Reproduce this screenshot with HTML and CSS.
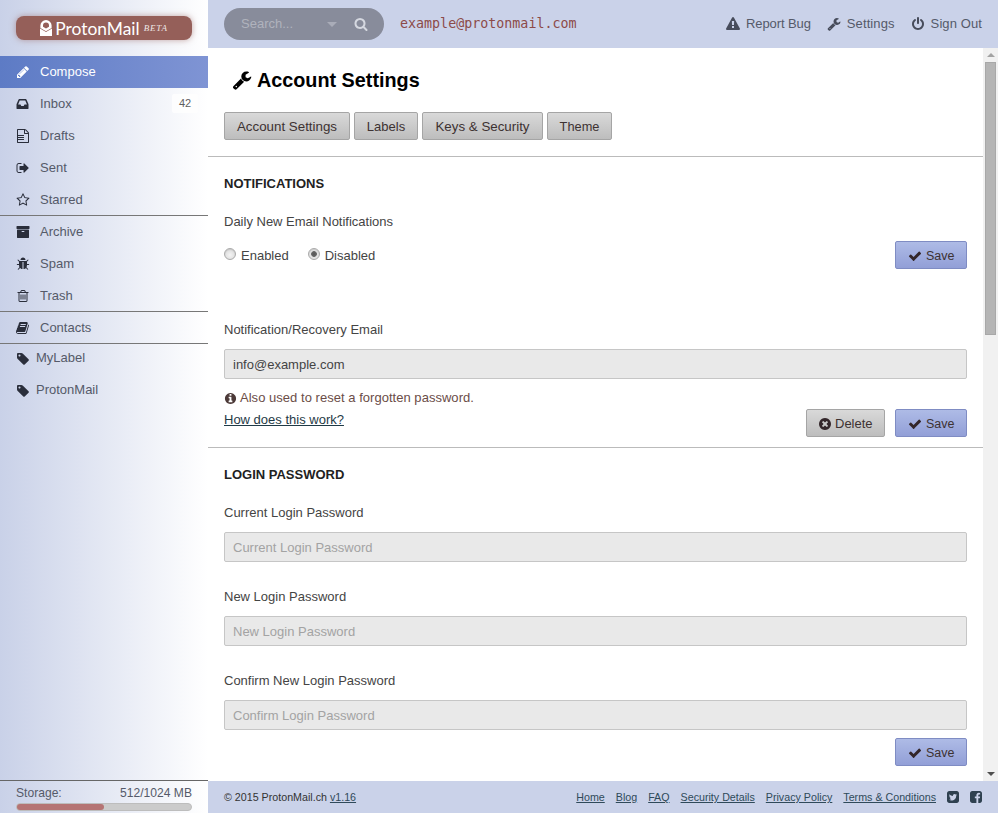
FILE: index.html
```html
<!DOCTYPE html>
<html lang="en">
<head>
<meta charset="utf-8">
<title>ProtonMail - Account Settings</title>
<link rel="stylesheet" href="styles.css">
</head>
<body>
<svg class="sprite" xmlns="http://www.w3.org/2000/svg">
<symbol id="i-wrench" viewBox="0 0 1792 1792"><path d="M448 1472q0-26-19-45t-45-19-45 19-19 45 19 45 45 19 45-19 19-45zm644-420l-682 682q-37 37-90 37-52 0-90-37l-106-108q-38-36-38-90 0-53 38-91l681-681q39 98 114.500 173.500t173.500 114.500zm634-435q0 39-23 106-47 134-164.500 217.500t-258.500 83.500q-185 0-316.500-131.500t-131.500-316.500 131.500-316.500 316.500-131.500q58 0 121.500 16.500t107.500 46.500q16 11 16 28t-16 28l-293 169v224l193 107q5-3 79-48.500t135.500-81 70.500-35.500q15 0 23.500 10t8.500 25z"/></symbol>
<symbol id="i-pencil" viewBox="0 0 1792 1792"><path d="M491 1536l91-91-235-235-91 91v107h128v128h107zm523-928q0-22-22-22-10 0-17 7l-542 542q-7 7-7 17 0 22 22 22 10 0 17-7l542-542q7-7 7-17zm-54-192l416 416-832 832h-416v-416zm683 96q0 53-37 90l-166 166-416-416 166-165q36-38 90-38 53 0 91 38l235 234q37 39 37 91z"/></symbol>
<symbol id="i-inbox" viewBox="-64 0 1792 1792"><path d="M1023 960h316q-1-3-2.500-8.500t-2.500-7.500l-212-496h-708l-212 496q-1 3-2.500 8.500t-2.500 7.500h316l95 192h320zm513 30v482q0 26-19 45t-45 19h-1408q-26 0-45-19t-19-45v-482q0-62 25-123l238-552q10-25 36.500-42t52.500-17h832q26 0 52.500 17t36.500 42l238 552q25 61 25 123z"/></symbol>
<symbol id="i-file" viewBox="0 0 1792 1792"><path d="M1596 380q28 28 48 76t20 88v1152q0 40-28 68t-68 28h-1344q-40 0-68-28t-28-68v-1600q0-40 28-68t68-28h896q40 0 88 20t76 48zm-444-244v376h376q-10-29-22-41l-313-313q-12-12-41-22zm384 1528v-1024h-416q-40 0-68-28t-28-68v-416h-768v1536h1408zm-1280-864q0-14 9-23t23-9h704q14 0 23 9t9 23v64q0 14-9 23t-23 9h-704q-14 0-23-9t-9-23v-64zm736 224q14 0 23 9t9 23v64q0 14-9 23t-23 9h-704q-14 0-23-9t-9-23v-64q0-14 9-23t23-9h704zm0 256q14 0 23 9t9 23v64q0 14-9 23t-23 9h-704q-14 0-23-9t-9-23v-64q0-14 9-23t23-9h704z"/></symbol>
<symbol id="i-signout" viewBox="0 0 1792 1792"><path d="M704 1440q0 4 1 20t.5 26.500-3 23.500-10 19.500-20.500 6.500h-320q-119 0-203.500-84.500t-84.500-203.500v-704q0-119 84.500-203.500t203.500-84.500h320q13 0 22.500 9.500t9.500 22.500q0 4 1 20t.5 26.500-3 23.500-10 19.500-20.500 6.500h-320q-66 0-113 47t-47 113v704q0 66 47 113t113 47h312l11.500 1 11.500 3 8 5.500 7 9 2 13.500zm928-544q0 26-19 45l-544 544q-19 19-45 19t-45-19-19-45v-288h-448q-26 0-45-19t-19-45v-384q0-26 19-45t45-19h448v-288q0-26 19-45t45-19 45 19l544 544q19 19 19 45z"/></symbol>
<symbol id="i-star" viewBox="0 0 1792 1792"><path d="M1201 1004l306-297-422-62-189-382-189 382-422 62 306 297-73 421 378-199 377 199zm527-357q0 22-26 48l-363 354 86 500q1 7 1 20 0 50-41 50-19 0-40-12l-449-236-449 236q-22 12-40 12-21 0-31.500-14.500t-10.500-35.500q0-6 2-20l86-500-364-354q-25-27-25-48 0-37 56-46l502-73 225-455q19-41 49-41t49 41l225 455 502 73q56 9 56 46z"/></symbol>
<symbol id="i-archive" viewBox="0 0 1792 1792"><path d="M1088 832q0-26-19-45t-45-19h-256q-26 0-45 19t-19 45 19 45 45 19h256q26 0 45-19t19-45zm576-192v960q0 26-19 45t-45 19h-1408q-26 0-45-19t-19-45v-960q0-26 19-45t45-19h1408q26 0 45 19t19 45zm64-448v256q0 26-19 45t-45 19h-1536q-26 0-45-19t-19-45v-256q0-26 19-45t45-19h1536q26 0 45 19t19 45z"/></symbol>
<symbol id="i-bug" viewBox="0 0 1792 1792"><path d="M1696 960q0 26-19 45t-45 19h-224q0 171-67 290l208 209q19 19 19 45t-19 45q-18 19-45 19t-45-19l-198-197q-5 5-15 13t-42 28.500-65 36.500-82 29-97 13v-896h-128v896q-51 0-101.500-13.500t-87-33-66-39-43.500-32.500l-15-14-183 207q-20 21-48 21-24 0-43-16-19-18-20.500-44.500t15.500-46.500l202-227q-58-114-58-274h-224q-26 0-45-19t-19-45 19-45 45-19h224v-294l-173-173q-19-19-19-45t19-45 45-19 45 19l173 173h844l173-173q19-19 45-19t45 19 19 45-19 45l-173 173v294h224q26 0 45 19t19 45zm-480-576h-640q0-133 93.500-226.500t226.500-93.500 226.500 93.500 93.500 226.500z"/></symbol>
<symbol id="i-trash" viewBox="0 0 1792 1792"><path d="M704 736v576q0 14-9 23t-23 9h-64q-14 0-23-9t-9-23v-576q0-14 9-23t23-9h64q14 0 23 9t9 23zm256 0v576q0 14-9 23t-23 9h-64q-14 0-23-9t-9-23v-576q0-14 9-23t23-9h64q14 0 23 9t9 23zm256 0v576q0 14-9 23t-23 9h-64q-14 0-23-9t-9-23v-576q0-14 9-23t23-9h64q14 0 23 9t9 23zm128 724v-948h-896v948q0 22 7 40.500t14.500 27 10.500 8.500h832q3 0 10.500-8.500t14.500-27 7-40.500zm-672-1076h448l-48-117q-7-9-17-11h-317q-10 2-17 11zm928 32v64q0 14-9 23t-23 9h-96v948q0 83-47 143.500t-113 60.500h-832q-66 0-113-58.500t-47-141.500v-952h-96q-14 0-23-9t-9-23v-64q0-14 9-23t23-9h309l70-167q15-37 54-63t79-26h320q40 0 79 26t54 63l70 167h309q14 0 23 9t9 23z"/></symbol>
<symbol id="i-book" viewBox="0 0 1792 1792"><path d="M1639 478q40 57 18 129l-275 906q-19 64-76.500 107.500t-122.500 43.500h-923q-77 0-148.500-53.500t-99.500-131.500q-24-67-2-127 0-4 3-27t4-37q1-8-3-21.500t-3-19.500q2-11 8-21t16.500-23.500 16.500-23.500q23-38 45-91.500t30-91.500q3-10 .5-30t-.5-28q3-11 17-28t17-23q21-36 42-92t25-90q1-9-2.500-32t.5-28q4-13 22-30.500t22-22.500q19-26 42.500-84.500t27.500-96.500q1-8-3-25.500t-2-26.500q2-8 9-18t18-23 17-21q8-12 16.500-30.500t15-35 16-36 19.500-32 26.500-23.500 36-11.500 47.500 5.500l-1 3q38-9 51-9h761q74 0 114 56t18 130l-274 906q-36 119-71.500 153.500t-128.500 34.500h-869q-27 0-38 15-11 16-1 43 24 70 144 70h923q29 0 56-15.500t35-41.500l300-987q7-22 5-57 38 15 59 43zm-1064 2q-4 13 2 22.500t20 9.500h608q13 0 25.500-9.500t16.500-22.500l21-64q4-13-2-22.500t-20-9.500h-608q-13 0-25.500 9.500t-16.500 22.500zm-83 256q-4 13 2 22.500t20 9.500h608q13 0 25.500-9.500t16.500-22.500l21-64q4-13-2-22.500t-20-9.500h-608q-13 0-25.500 9.500t-16.500 22.500z"/></symbol>
<symbol id="i-tag" viewBox="0 -128 1792 1792"><path d="M576 448q0-53-37.500-90.500t-90.500-37.500-90.500 37.500-37.500 90.500 37.500 90.500 90.500 37.500 90.500-37.500 37.500-90.500zm1067 576q0 53-37 90l-491 492q-39 37-91 37-53 0-90-37l-715-716q-38-37-64.500-101t-26.500-117v-416q0-52 38-90t90-38h416q53 0 117 26.500t102 64.500l715 714q37 39 37 91z"/></symbol>
<symbol id="i-warning" viewBox="0 0 1792 1792"><path d="M1024 1375v-190q0-14-9.500-23.500t-22.500-9.500h-192q-13 0-22.500 9.500t-9.500 23.500v190q0 14 9.500 23.500t22.500 9.500h192q13 0 22.500-9.500t9.500-23.500zm-2-374l18-459q0-12-10-19-13-11-24-11h-220q-11 0-24 11-10 7-10 21l17 457q0 10 10 16.500t24 6.500h185q14 0 23.500-6.500t10.500-16.500zm-14-934l768 1408q35 63-2 126-17 29-46.500 46t-63.500 17h-1536q-34 0-63.500-17t-46.500-46q-37-63-2-126l768-1408q17-31 47-49t65-18 65 18 47 49z"/></symbol>
<symbol id="i-power" viewBox="0 0 1792 1792"><path d="M1664 896q0 156-61 298t-164 245-245 164-298 61-298-61-245-164-164-245-61-298q0-182 80.500-343t226.500-270q43-32 95.500-25t83.500 50q32 42 24.500 94.500t-49.500 84.500q-98 74-151.500 181t-53.500 228q0 104 40.500 198.500t109.500 163.500 163.500 109.500 198.500 40.500 198.500-40.500 163.500-109.500 109.500-163.500 40.500-198.500q0-121-53.500-228t-151.500-181q-42-32-49.500-84.500t24.500-94.500q31-43 84-50t95 25q146 109 226.500 270t80.500 343zm-640-768v640q0 52-38 90t-90 38-90-38-38-90v-640q0-52 38-90t90-38 90 38 38 90z"/></symbol>
<symbol id="i-search" viewBox="0 0 1792 1792"><path d="M1216 832q0-185-131.500-316.500t-316.500-131.500-316.500 131.500-131.500 316.500 131.500 316.500 316.500 131.500 316.500-131.500 131.500-316.500zm512 832q0 52-38 90t-90 38q-54 0-90-38l-343-342q-179 124-399 124-143 0-273.500-55.500t-225-150-150-225-55.500-273.500 55.500-273.500 150-225 225-150 273.500-55.500 273.500 55.500 225 150 150 225 55.500 273.500q0 220-124 399l343 343q37 37 37 90z"/></symbol>
<symbol id="i-check" viewBox="0 0 1792 1792"><path d="M1671 566q0 40-28 68l-724 724-136 136q-28 28-68 28t-68-28l-136-136-362-362q-28-28-28-68t28-68l136-136q28-28 68-28t68 28l294 295 656-657q28-28 68-28t68 28l136 136q28 28 28 68z"/></symbol>
<symbol id="i-times" viewBox="0 0 1792 1792"><path d="M1277 1122q0-26-19-45l-181-181 181-181q19-19 19-45 0-27-19-46l-90-90q-19-19-46-19-26 0-45 19l-181 181-181-181q-19-19-45-19-27 0-46 19l-90 90q-19 19-19 46 0 26 19 45l181 181-181 181q-19 19-19 45 0 27 19 46l90 90q19 19 46 19 26 0 45-19l181-181 181 181q19 19 45 19 27 0 46-19l90-90q19-19 19-46zm387-226q0 209-103 385.500t-279.500 279.500-385.500 103-385.500-103-279.500-279.500-103-385.500 103-385.500 279.500-279.500 385.500-103 385.500 103 279.500 279.500 103 385.500z"/></symbol>
<symbol id="i-info" viewBox="0 0 1792 1792"><path d="M1152 1376v-160q0-14-9-23t-23-9h-96v-512q0-14-9-23t-23-9h-320q-14 0-23 9t-9 23v160q0 14 9 23t23 9h96v320h-96q-14 0-23 9t-9 23v160q0 14 9 23t23 9h448q14 0 23-9t9-23zm-128-896v-160q0-14-9-23t-23-9h-192q-14 0-23 9t-9 23v160q0 14 9 23t23 9h192q14 0 23-9t9-23zm640 416q0 209-103 385.500t-279.500 279.500-385.500 103-385.500-103-279.500-279.500-103-385.500 103-385.500 279.500-279.500 385.500-103 385.500 103 279.500 279.500 103 385.500z"/></symbol>
<symbol id="i-twitter" viewBox="0 0 1792 1792"><path d="M1408 610q-56 25-121 34 68-40 93-117-65 38-134 51-61-66-153-66-87 0-148.500 61.500t-61.500 148.500q0 29 5 48-129-7-242-65t-192-155q-29 50-29 106 0 114 91 175-47-1-100-26v2q0 75 50 133.500t123 72.500q-29 8-51 8-13 0-39-4 21 63 74.500 104t121.500 42q-116 90-261 90-26 0-50-3 148 94 322 94 112 0 210-35.500t168-95 120.500-137 75-162 24.500-168.500q0-18-1-27 63-45 105-109zm256-194v960q0 119-84.500 203.500t-203.500 84.500h-960q-119 0-203.500-84.500t-84.500-203.500v-960q0-119 84.500-203.500t203.500-84.500h960q119 0 203.500 84.500t84.500 203.500z"/></symbol>
<symbol id="i-facebook" viewBox="0 0 1792 1792"><path d="M1376 128q119 0 203.500 84.500t84.500 203.500v960q0 119-84.500 203.500t-203.500 84.500h-188v-595h199l30-232h-229v-148q0-56 23.500-84t91.500-28l122-1v-207q-63-9-178-9-136 0-217.500 80t-81.500 226v171h-200v232h200v595h-532q-119 0-203.500-84.500t-84.500-203.500v-960q0-119 84.500-203.500t203.500-84.500h960z"/></symbol>
</svg>

<div class="app">
  <aside class="sidebar">
    <div class="logo-area">
      <div class="logo">
        <svg class="logo-mark" viewBox="0 0 12 16" fill="#fff"><path d="M0 8.600 6 12l6-3.400V16H0z"/><path fill-rule="evenodd" d="M6 0a5.600 5.600 0 0 1 5.600 5.600V8L6 11.200.4 8V5.600A5.600 5.600 0 0 1 6 0zm0 2.400a3 3 0 0 0-3 3v1.400l3 1.700 3-1.700V5.400a3 3 0 0 0-3-3z"/></svg>
        <span class="logo-name">ProtonMail</span>
        <span class="logo-beta">BETA</span>
      </div>
    </div>
    <nav class="nav">
      <a class="nav-item is-active"><svg class="nav-icon"><use href="#i-pencil"/></svg>Compose</a>
      <a class="nav-item"><svg class="nav-icon"><use href="#i-inbox"/></svg>Inbox<span class="badge">42</span></a>
      <a class="nav-item"><svg class="nav-icon"><use href="#i-file"/></svg>Drafts</a>
      <a class="nav-item"><svg class="nav-icon"><use href="#i-signout"/></svg>Sent</a>
      <a class="nav-item has-rule"><svg class="nav-icon"><use href="#i-star"/></svg>Starred</a>
      <a class="nav-item"><svg class="nav-icon"><use href="#i-archive"/></svg>Archive</a>
      <a class="nav-item"><svg class="nav-icon"><use href="#i-bug"/></svg>Spam</a>
      <a class="nav-item has-rule"><svg class="nav-icon"><use href="#i-trash"/></svg>Trash</a>
      <a class="nav-item has-rule"><svg class="nav-icon"><use href="#i-book"/></svg>Contacts</a>
      <a class="nav-item is-label"><svg class="nav-icon"><use href="#i-tag"/></svg>MyLabel</a>
      <a class="nav-item is-label"><svg class="nav-icon"><use href="#i-tag"/></svg>ProtonMail</a>
    </nav>
    <div class="storage">
      <div class="storage-text"><span>Storage:</span><span>512/1024 MB</span></div>
      <div class="storage-bar"><div class="storage-fill" style="width:50%"></div></div>
    </div>
  </aside>

  <div class="main">
    <header class="topbar">
      <div class="search">
        <input class="search-input" type="text" placeholder="Search...">
        <span class="search-caret"></span>
        <svg class="search-icon"><use href="#i-search"/></svg>
      </div>
      <span class="address">example@protonmail.com</span>
      <div class="top-links">
        <a class="top-link link-tight"><svg class="top-icon"><use href="#i-warning"/></svg>Report Bug</a>
        <a class="top-link link-wide"><svg class="top-icon"><use href="#i-wrench"/></svg>Settings</a>
        <a class="top-link link-wide"><svg class="top-icon"><use href="#i-power"/></svg>Sign Out</a>
      </div>
    </header>

    <div class="middle">
      <main class="content">
        <div class="page-head">
          <h1 class="page-title"><svg class="title-icon"><use href="#i-wrench"/></svg>Account Settings</h1>
          <div class="tabs">
            <button class="btn tab tab-account">Account Settings</button>
            <button class="btn tab tab-labels">Labels</button>
            <button class="btn tab tab-keys">Keys &amp; Security</button>
            <button class="btn tab tab-theme">Theme</button>
          </div>
        </div>

        <section class="section">
          <h2 class="section-title">NOTIFICATIONS</h2>
          <label class="field-label">Daily New Email Notifications</label>
          <div class="radio-row">
            <div class="radios">
              <label class="radio"><input type="radio" name="daily">Enabled</label>
              <label class="radio"><input type="radio" name="daily" checked>Disabled</label>
            </div>
            <button class="btn btn-primary"><svg class="btn-icon"><use href="#i-check"/></svg>Save</button>
          </div>
          <label class="field-label field-far">Notification/Recovery Email</label>
          <input class="text-input" type="text" value="info@example.com">
          <div class="help-row">
            <div>
              <p class="help"><svg class="help-icon"><use href="#i-info"/></svg>Also used to reset a forgotten password.</p>
              <a class="help-link">How does this work?</a>
            </div>
            <div class="actions">
              <button class="btn btn-delete"><svg class="btn-icon"><use href="#i-times"/></svg>Delete</button>
              <button class="btn btn-primary"><svg class="btn-icon"><use href="#i-check"/></svg>Save</button>
            </div>
          </div>
        </section>

        <section class="section">
          <h2 class="section-title">LOGIN PASSWORD</h2>
          <label class="field-label">Current Login Password</label>
          <input class="text-input" type="password" placeholder="Current Login Password">
          <label class="field-label field-next">New Login Password</label>
          <input class="text-input" type="password" placeholder="New Login Password">
          <label class="field-label field-next">Confirm New Login Password</label>
          <input class="text-input" type="password" placeholder="Confirm Login Password">
          <div class="form-end">
            <button class="btn btn-primary"><svg class="btn-icon"><use href="#i-check"/></svg>Save</button>
          </div>
        </section>
      </main>
      <div class="scrollbar">
        <span class="arrow arrow-up"></span>
        <div class="thumb"></div>
        <span class="arrow arrow-down"></span>
      </div>
    </div>

    <footer class="footer">
      <span>&copy; 2015 ProtonMail.ch <a class="foot-link">v1.16</a></span>
      <div class="foot-links">
        <a class="foot-link">Home</a>
        <a class="foot-link">Blog</a>
        <a class="foot-link">FAQ</a>
        <a class="foot-link">Security Details</a>
        <a class="foot-link">Privacy Policy</a>
        <a class="foot-link">Terms &amp; Conditions</a>
        <svg class="foot-icon"><use href="#i-twitter"/></svg>
        <svg class="foot-icon"><use href="#i-facebook"/></svg>
      </div>
    </footer>
  </div>
</div>
</body>
</html>
```

FILE: styles.css
```css
* { box-sizing: border-box; }
html, body { margin: 0; height: 100%; overflow: hidden; }
body { font: 13px/20px "Liberation Sans", Arial, sans-serif; color: #444; background: #fff; }
svg { fill: currentColor; display: block; flex: none; }
.sprite { display: none; }
a { color: inherit; }

.app { display: flex; height: 813px; }

/* Sidebar */
.sidebar { width: 208px; flex: none; display: flex; flex-direction: column; background: linear-gradient(90deg, #c9d1e8 0%, #fff 100%); }
.logo-area { height: 56px; padding: 16px 16px 0; }
.logo { height: 24px; border-radius: 8px; background: #955f59; box-shadow: 0 0 6px rgba(149, 95, 89, .55); color: #fff; display: flex; align-items: center; justify-content: center; }
.logo-mark { width: 12px; height: 16px; margin-right: 3px; }
.logo-name { font: 17.400px/24px Lato, "Noto Sans", sans-serif; padding-top: 1px; }
.logo-beta { font: italic 400 9px/24px "Liberation Serif", serif; margin-left: 4px; letter-spacing: .8px; opacity: .85; }
.nav { flex: 1; }
.nav-item { height: 32px; display: flex; align-items: center; padding-left: 15.500px; color: #555a69; line-height: 32px; position: relative; }
.nav-icon { width: 14px; height: 14px; margin-right: 10.500px; color: #2a2e3b; }
.is-active { color: #fff; background: linear-gradient(90deg, #5d7bc5, #7f94d4); }
.is-active .nav-icon { color: #fff; }
.has-rule { border-bottom: 1px solid #777; }
.is-label { align-items: flex-start; line-height: 28px; }
.is-label .nav-icon { margin: 7px 6.500px 0 0; }
.badge { position: absolute; right: 10px; top: 6px; width: 26px; height: 19px; background: #fff; border-radius: 2px; font-size: 11px; line-height: 19px; text-align: center; color: #444; opacity: .85; }
.storage { height: 33px; border-top: 1px solid #666; padding: 2px 16px 0; }
.storage-text { display: flex; justify-content: space-between; color: #555a69; font-size: 12.100px; height: 20px; }
.storage-bar { height: 8px; border-radius: 4px; background: #cbcbcb; border: 1px solid #bdbdbd; }
.storage-fill { height: 100%; border-radius: 3px; background: #b57474; }

/* Main */
.main { flex: 1; min-width: 0; display: flex; flex-direction: column; }
.topbar { height: 48px; flex: none; background: #cad2e9; display: flex; align-items: center; padding: 0 16px; color: #555a69; }
.search { width: 160px; height: 32px; border-radius: 16px; background: #888c9b; display: flex; align-items: center; padding-left: 17px; color: #d5d8e0; }
.search-input { width: 86px; border: 0; padding: 0; background: transparent; font: inherit; color: inherit; outline: none; }
.search-input::placeholder { color: #b0b3bd; opacity: 1; }
.search-caret { width: 0; height: 0; border: 5px solid transparent; border-top-color: #a9acb8; border-bottom: 0; margin-right: 17px; }
.search-icon { width: 14px; height: 14px; }
.address { margin-left: 16px; font: 13.330px/20px "DejaVu Sans Mono", monospace; color: #8c4a48; }
.top-links { margin-left: auto; display: flex; gap: 16px; }
.top-link { display: flex; align-items: center; }
.link-tight { letter-spacing: -.1px; }
.link-wide { letter-spacing: .1px; }
.top-icon { width: 14px; height: 14px; margin-right: 6px; color: #474c5b; }

.middle { flex: 1; min-height: 0; display: flex; }
.content { flex: 1; min-width: 0; overflow: hidden; background: #fff; }
.page-head { padding: 0 16px 16px; }
.page-title { margin: 0; height: 64px; padding: 20px 0 0 7.500px; display: flex; align-items: flex-start; font-size: 19.800px; line-height: 24px; font-weight: 700; color: #000; }
.title-icon { width: 20px; height: 20px; margin: 2px 5.500px 0 0; }
.tabs { display: flex; gap: 4px; }
.btn { height: 28px; padding: 1px 0 0 12px; width: 72px; display: inline-flex; align-items: center; border: 1px solid #a5a5a5; border-radius: 2px; background: linear-gradient(#d9d9d9, #bdbdbd); font: 12.500px/20px "Liberation Sans", Arial, sans-serif; color: #3d3232; }
.btn-primary { background: linear-gradient(#aebbe6, #929fd7); border-color: #7f8cc3; }
.btn-delete { width: 79px; padding-left: 11px; font-size: 13px; }
.btn-delete .btn-icon { margin-right: 3px; }
.btn-icon { width: 14px; height: 14px; margin-right: 4px; color: #33262a; }
.tab { padding-left: 0; justify-content: center; font-size: 13.330px; }
.tab-account { width: 126px; }
.tab-labels { width: 64px; font-size: 13px; }
.tab-keys { width: 121px; }
.tab-theme { width: 65px; font-size: 12.800px; }

.section { border-top: 1px solid #bbb; padding: 17px 16px 10px; }
.section-title { margin: 0; font-size: 13px; line-height: 20px; font-weight: 700; color: #222; }
.field-label { display: block; margin: 18px 0 9px; }
.field-far { margin-top: 51px; }
.field-next { margin-top: 25px; }
.radio-row { display: flex; justify-content: space-between; align-items: center; }
.radios { display: flex; gap: 19px; padding-top: 2px; }
.radio { display: flex; align-items: center; }
.radio input { appearance: none; width: 12px; height: 12px; margin: -5px 5px 0 0; border: 1px solid #aaa; border-radius: 50%; background: radial-gradient(circle at 50% 60%, #f4f4f4, #d4d4d4); box-shadow: inset 0 1px 1px rgba(0, 0, 0, .1); }
.radio input:checked { background: radial-gradient(circle, #555 0, #666 2.500px, #e2e2e2 3.200px); }
.text-input { display: block; width: 100%; height: 30px; padding: 0 8px; border: 1px solid #c6c6c6; border-radius: 2px; background: #e9e9e9; font: inherit; color: #444; outline: none; }
.text-input::placeholder { color: #a3a3a3; opacity: 1; }
.help-row { display: flex; justify-content: space-between; align-items: flex-end; margin-top: 9px; }
.help { margin: 0; display: flex; align-items: center; color: #6b4d48; letter-spacing: .03px; }
.help-icon { width: 13px; height: 13px; margin-right: 3px; color: #4c3a38; }
.help-link { display: block; color: #1f3a46; text-decoration: underline; margin-top: 2px; padding-bottom: 7px; }
.actions { display: flex; gap: 10px; }
.form-end { display: flex; justify-content: flex-end; margin-top: 8px; }

/* Drawn scrollbar */
.scrollbar { width: 15px; flex: none; background: #f1f1f1; display: flex; flex-direction: column; align-items: center; padding: 5px 0 5px; }
.thumb { width: 11px; height: 273px; margin: 5px 0 auto; background: #b5b5b5; border: 1px solid #a8a8a8; }
.arrow { width: 0; height: 0; flex: none; border-left: 4px solid transparent; border-right: 4px solid transparent; }
.arrow-up { border-bottom: 4px solid #a3a3a3; }
.arrow-down { border-top: 4px solid #505050; }

/* Footer */
.footer { height: 32px; flex: none; background: #cad2e9; display: flex; align-items: center; justify-content: space-between; padding: 0 16px; font-size: 10.700px; color: #333; }
.foot-links { display: flex; align-items: center; gap: 11px; }
.foot-link { color: #2f4a5a; text-decoration: underline; }
.foot-icon { width: 14px; height: 14px; margin: -1px -1px 0; color: #2f4150; }
```
